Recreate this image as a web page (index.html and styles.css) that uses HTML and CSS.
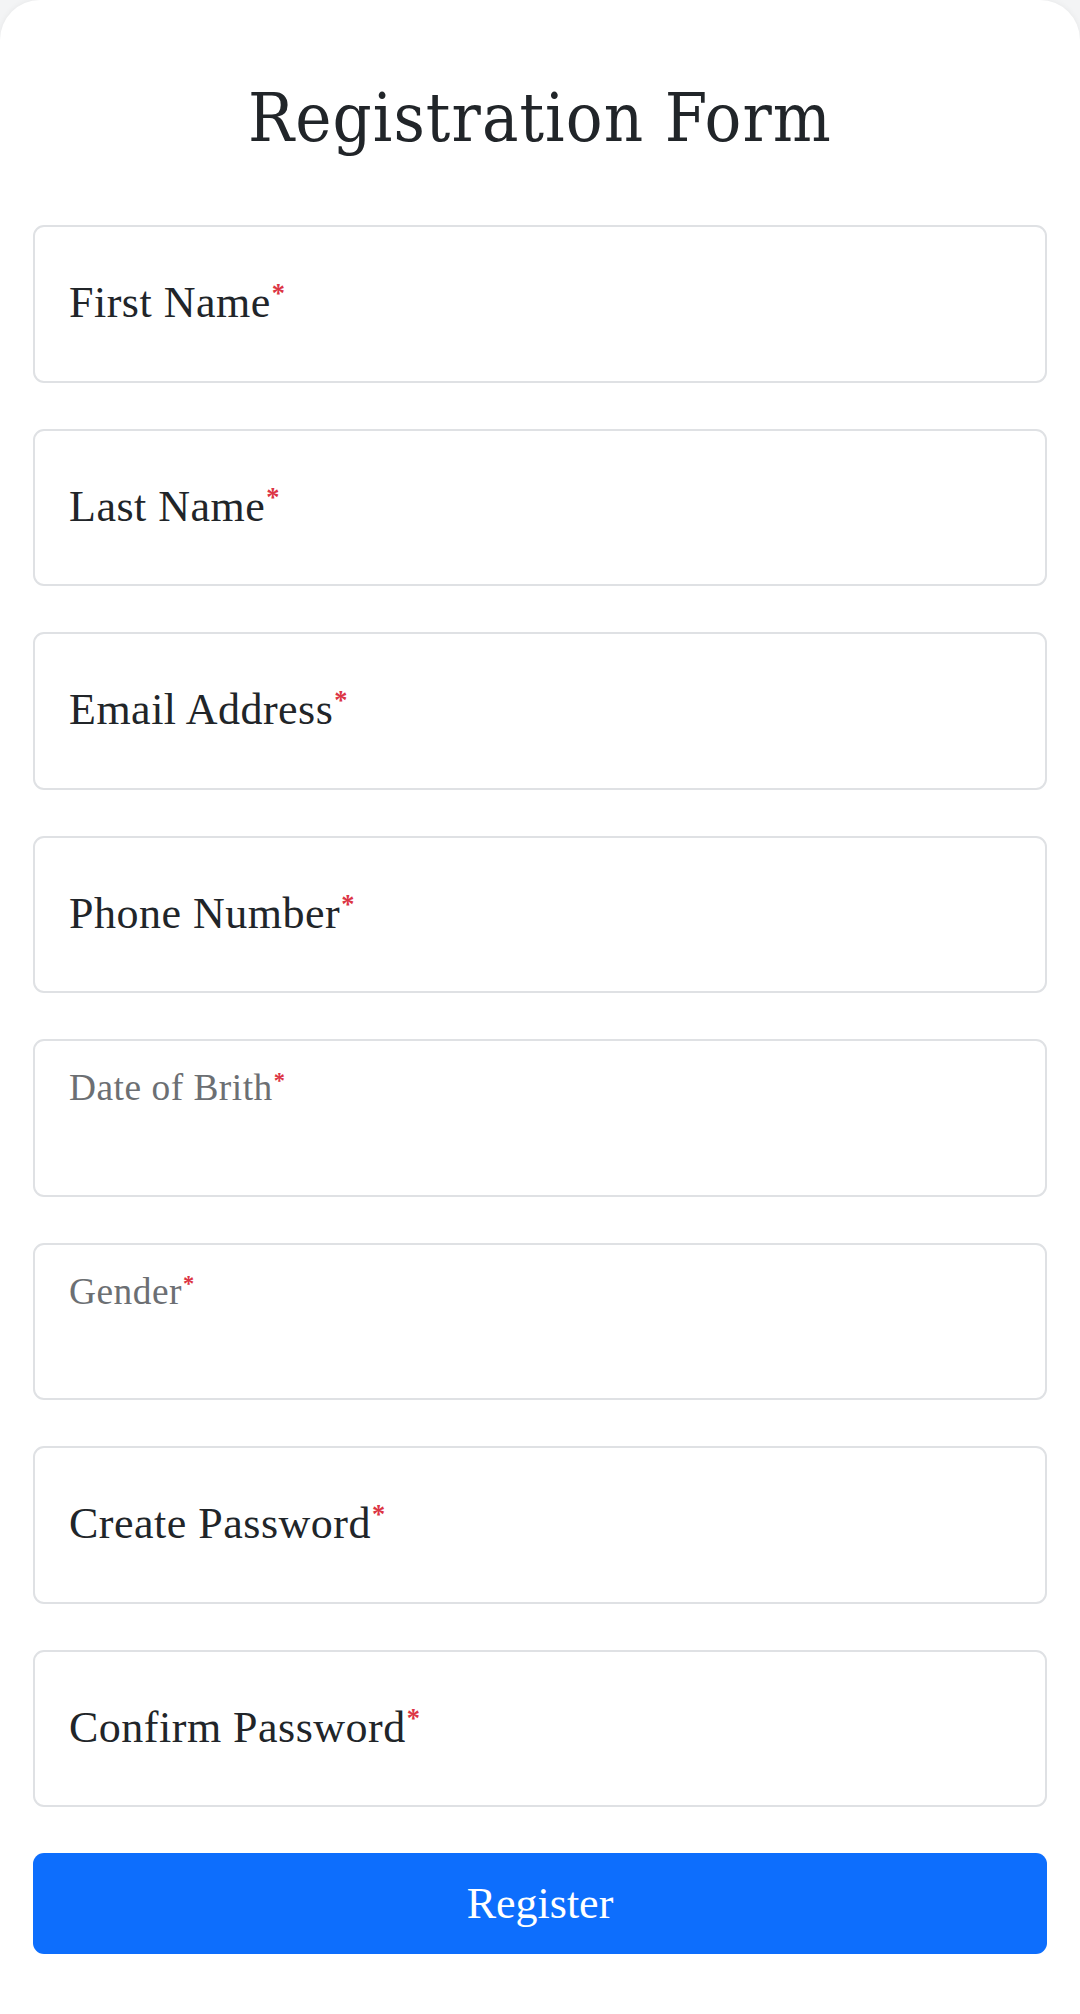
FILE: index.html
```html
<!DOCTYPE html>
<html lang="en">
<head>
<meta charset="utf-8">
<title>Registration Form</title>
<link rel="stylesheet" href="styles.css">
</head>
<body>
<main class="card">
  <h1 class="title">Registration Form</h1>
  <form class="form">
    <div class="field"><span class="label">First Name<sup class="req">*</sup></span></div>
    <div class="field"><span class="label">Last Name<sup class="req">*</sup></span></div>
    <div class="field"><span class="label">Email Address<sup class="req">*</sup></span></div>
    <div class="field"><span class="label">Phone Number<sup class="req">*</sup></span></div>
    <div class="field field-float"><span class="label">Date of Brith<sup class="req">*</sup></span></div>
    <div class="field field-float"><span class="label">Gender<sup class="req">*</sup></span></div>
    <div class="field"><span class="label">Create Password<sup class="req">*</sup></span></div>
    <div class="field"><span class="label">Confirm Password<sup class="req">*</sup></span></div>
    <button type="button" class="btn">Register</button>
  </form>
</main>
</body>
</html>
```

FILE: styles.css
```css
html, body {
  margin: 0;
  padding: 0;
  background: #f3f4f5;
}

body {
  font-family: "Liberation Serif", serif;
  color: #212529;
}

.card {
  background: #ffffff;
  border-radius: 40px 40px 0 0;
  box-shadow: 0 0 6px rgba(0, 0, 0, 0.06);
  min-height: 2014px;
  box-sizing: border-box;
  padding: 78px 33px 0 33px;
}

.title {
  margin: 0 0 67px 0;
  font-family: "DejaVu Serif Condensed", "DejaVu Serif", serif;
  font-weight: 400;
  font-size: 68px;
  line-height: 80px;
  letter-spacing: 1.1px;
  text-align: center;
  color: #212529;
}

.form {
  display: flex;
  flex-direction: column;
  gap: 46px;
}

.field {
  height: 157.5px;
  box-sizing: border-box;
  border: 2px solid #dfe1e4;
  border-radius: 11px;
  background: #fff;
  padding: 43px 34px 0 34px;
}

.label {
  display: block;
  font-size: 44px;
  line-height: 66px;
  letter-spacing: 0.5px;
  color: #212529;
}

.field-float {
  padding-top: 19px;
}

.field-float .label {
  font-size: 37.4px;
  line-height: 56px;
  color: #6c6f73;
}

.req {
  color: #dc3545;
  font-size: 0.6em;
  font-weight: 700;
  vertical-align: baseline;
  position: relative;
  top: -0.55em;
  line-height: 0;
  margin-left: 1px;
}

.btn {
  height: 101px;
  border: none;
  border-radius: 11px;
  background: #0d6efd;
  color: #ffffff;
  font-family: "Liberation Serif", serif;
  font-size: 44px;
  padding: 0;
  cursor: pointer;
}
```
